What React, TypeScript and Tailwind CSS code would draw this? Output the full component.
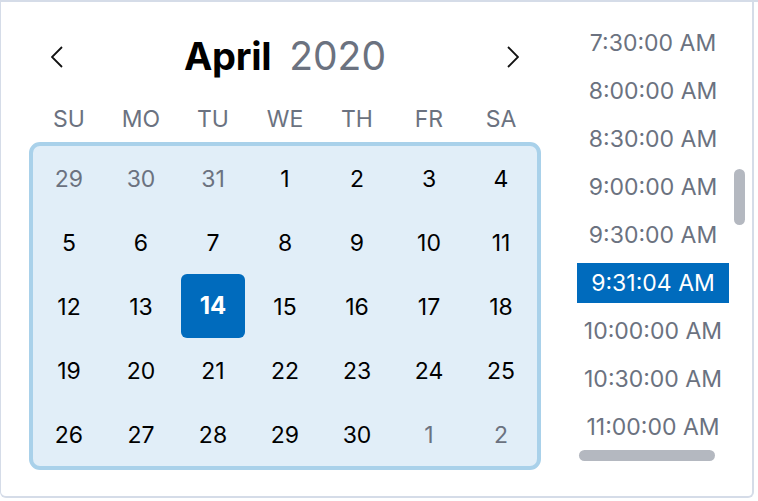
import React from "react";

const days = ["SU", "MO", "TU", "WE", "TH", "FR", "SA"];
const weeks: { d: number; muted?: boolean }[][] = [
  [{ d: 29, muted: true }, { d: 30, muted: true }, { d: 31, muted: true }, { d: 1 }, { d: 2 }, { d: 3 }, { d: 4 }],
  [5, 6, 7, 8, 9, 10, 11].map((d) => ({ d })),
  [12, 13, 14, 15, 16, 17, 18].map((d) => ({ d })),
  [19, 20, 21, 22, 23, 24, 25].map((d) => ({ d })),
  [{ d: 26 }, { d: 27 }, { d: 28 }, { d: 29 }, { d: 30 }, { d: 1, muted: true }, { d: 2, muted: true }],
];
const times = [
  "7:30:00 AM",
  "8:00:00 AM",
  "8:30:00 AM",
  "9:00:00 AM",
  "9:30:00 AM",
  "9:31:04 AM",
  "10:00:00 AM",
  "10:30:00 AM",
  "11:00:00 AM",
];

export default function App() {
  return (
    <div
      className="relative w-[758px] h-[501px] bg-white overflow-hidden"
      style={{ fontFamily: "Inter, 'Noto Sans', sans-serif" }}
    >
      <div className="h-[2px] bg-[#d5dce8]" />
      <div className="flex w-[754px] h-[496px] border-l border-r-2 border-b-2 border-[#d5dce8] rounded-b-[6px] bg-white">
        {/* calendar */}
        <div className="ml-[28px] w-[512px] flex flex-col">
          <div className="mt-[31px] h-[44px] flex items-center justify-between px-[22px]">
            <svg width="12" height="22" viewBox="0 0 12 22" fill="none" className="mt-[4px]">
              <polyline points="11,1 1,11 11,21" stroke="#111" strokeWidth="1.8" strokeLinejoin="miter" />
            </svg>
            <div className="flex items-baseline gap-[18px] text-[38px] leading-none">
              <span className="font-bold text-black tracking-[-0.3px]">April</span>
              <span className="text-[#6b7280] text-[39px]">2020</span>
            </div>
            <svg width="12" height="22" viewBox="0 0 12 22" fill="none" className="mt-[4px]">
              <polyline points="1,1 11,11 1,21" stroke="#111" strokeWidth="1.8" strokeLinejoin="miter" />
            </svg>
          </div>
          <div className="mt-[30px] grid grid-cols-7 px-[4px] h-[24px] items-center">
            {days.map((d) => (
              <div key={d} className="text-center text-[23px] leading-none text-[#6b7280]">
                {d}
              </div>
            ))}
          </div>
          <div className="mt-[11px] border-4 border-[#a9d1ea] bg-[#e1eef8] rounded-[11px]">
            {weeks.map((w, i) => (
              <div key={i} className="grid grid-cols-7 h-[64px]">
                {w.map((c, j) => {
                  const sel = i === 2 && c.d === 14;
                  return (
                    <div key={j} className="flex items-center justify-center">
                      {sel ? (
                        <div className="w-[64px] h-[64px] rounded-[6px] bg-[#006bbd] text-white font-bold text-[24px] flex items-center justify-center">
                          14
                        </div>
                      ) : (
                        <span className={`text-[23px] leading-none mt-[2px] ${c.muted ? "text-[#6b7280]" : "text-black"}`}>
                          {c.d}
                        </span>
                      )}
                    </div>
                  );
                })}
              </div>
            ))}
          </div>
        </div>
        {/* times */}
        <div className="relative ml-[36px] w-[152px] flex flex-col pt-[21px]">
          {times.map((t) => {
            const sel = t === "9:31:04 AM";
            return (
              <div
                key={t}
                className={`h-[40px] mb-[8px] flex items-center justify-center text-[23px] whitespace-nowrap ${
                  sel ? "bg-[#006bbd] text-white" : "text-[#6b7280]"
                }`}
              >
                {t}
              </div>
            );
          })}
        </div>
        <div className="relative flex-1">
          <div className="absolute left-[5px] top-[167px] w-[11px] h-[56px] rounded-full bg-[#b4b8c0]" />
        </div>
      </div>
      <div className="absolute left-[579px] top-[450px] w-[136px] h-[11px] rounded-full bg-[#b4b8c0]" />
    </div>
  );
}
